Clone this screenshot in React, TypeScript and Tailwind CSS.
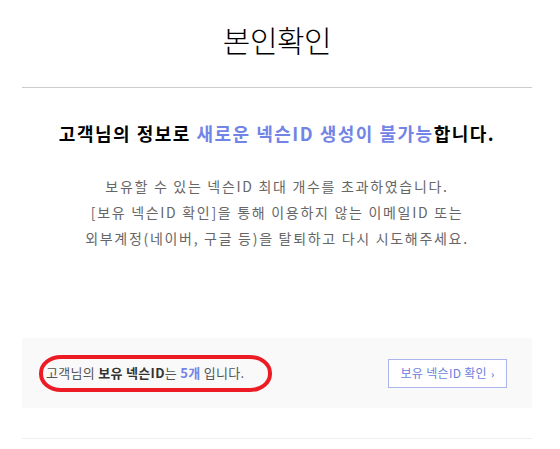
export default function App() {
  const font = { fontFamily: '"Noto Sans CJK KR", "Noto Sans", sans-serif' };
  return (
    <div className="w-[560px] h-[449px] bg-white" style={font}>
      <div className="mx-[22px] w-[510px]">
        <div className="h-[88px] border-b border-[#cccccc] flex items-center justify-center">
          <h1 className="text-[30px] font-light text-black leading-none tracking-[-0.5px] -mt-[10px]">본인확인</h1>
        </div>
        <p className="mt-[33px] text-center text-[18px] font-bold text-black leading-[24px] tracking-[1.5px]">
          고객님의 정보로 <span className="text-[#7284e6]">새로운 넥슨ID 생성이 불가능</span>합니다.
        </p>
        <div className="mt-[28px] text-center text-[14px] text-[#666666] leading-[26px] tracking-[1.7px]">
          <p>보유할 수 있는 넥슨ID 최대 개수를 초과하였습니다.</p>
          <p>[보유 넥슨ID 확인]을 통해 이용하지 않는 이메일ID 또는</p>
          <p>외부계정(네이버, 구글 등)을 탈퇴하고 다시 시도해주세요.</p>
        </div>
        <div className="relative mt-[87px] h-[70px] bg-[#f9f9f9] flex items-center justify-between pl-[24px] pr-[25px]">
          <p className="text-[13px] text-[#555555] tracking-[0.3px]">
            고객님의 <b className="font-bold text-[#333333]">보유 넥슨ID</b>는 <b className="font-bold text-[#7284e6]">5개</b> 입니다.
          </p>
          <button className="h-[29px] w-[119px] border border-[#aab4ef] bg-white text-[12px] text-[#6b7fe0] flex items-center justify-center gap-[4px] tracking-[0.3px]">
            보유 넥슨ID 확인 <span className="text-[10px] font-bold">›</span>
          </button>
          <div className="absolute left-[17px] top-[17px] w-[233px] h-[37px] border-[4px] border-[#ed1c24] rounded-[22px/18px] pointer-events-none" />
        </div>
        <div className="mt-[30px] border-b border-[#eeeeee]" />
      </div>
    </div>
  );
}
